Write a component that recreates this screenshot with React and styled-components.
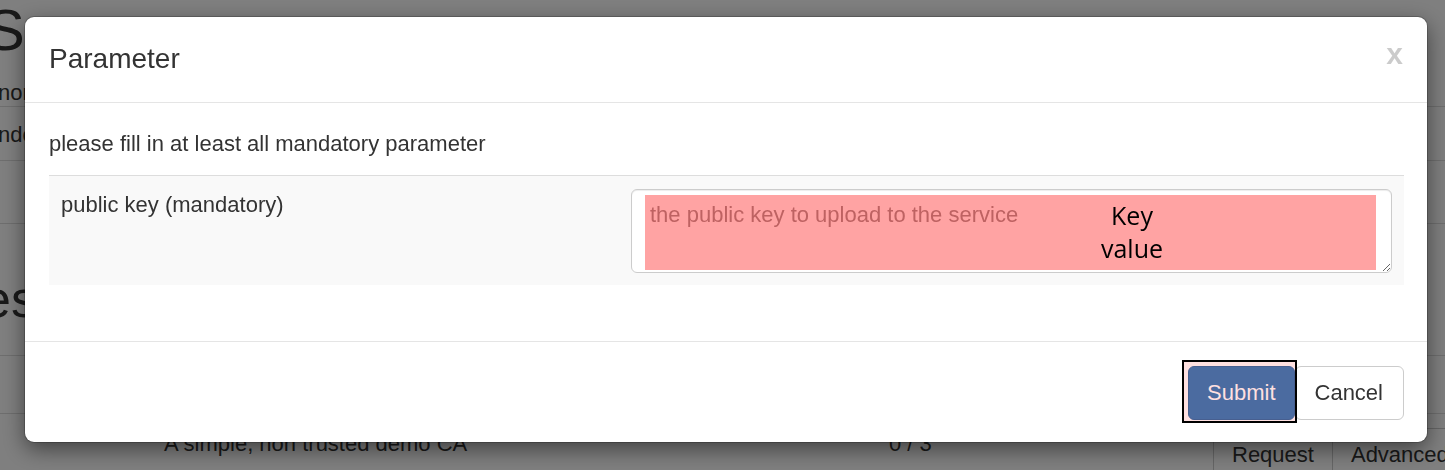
import React from 'react'
import styled, { createGlobalStyle } from 'styled-components'

const GlobalStyle = createGlobalStyle`
  html, body {
    margin: 0;
    padding: 0;
  }
  body {
    font-family: "Liberation Sans", Arial, sans-serif;
    font-size: 22px;
    line-height: 1.42857;
    color: #333;
    background: #fff;
    overflow: hidden;
  }
  * {
    box-sizing: border-box;
  }
`

/* page behind the dialog */
const Page = styled.div`
  width: 1445px;
  height: 470px;
  overflow: hidden;
`

const PageTitle = styled.h1`
  margin: -2px 0 0 -14px;
  font-size: 58px;
  font-weight: 400;
  line-height: 1.1;
  white-space: nowrap;
`

const InfoRow = styled.div`
  height: ${p => p.$h}px;
  padding-top: ${p => p.$pt}px;
  margin-left: -2px;
  border-bottom: 1px solid #ddd;
  line-height: 24px;
  white-space: nowrap;
`

const SectionTitle = styled.h2`
  margin: 47px 0 0 -18px;
  font-size: 52px;
  font-weight: 400;
  line-height: 1.1;
  white-space: nowrap;
`

const CaTable = styled.div`
  margin-top: 27px;
  border-top: 1px solid #ddd;
`

const CaHead = styled.div`
  height: 58px;
  border-bottom: 1px solid #ddd;
`

const CaRow = styled.div`
  display: grid;
  grid-template-columns: 152px 725px 324px 1fr;
`

const CaCell = styled.div`
  padding: 14px 12px 0;
  white-space: nowrap;
`

const BtnGroup = styled.div`
  display: inline-flex;
`

const PageButton = styled.button`
  font: inherit;
  color: #333;
  background: #fff;
  border: 1px solid #ccc;
  padding: 10px 18px;
  margin-left: ${p => (p.$joined ? '-1px' : '0')};
  border-radius: ${p => (p.$joined ? '0 6px 6px 0' : '6px 0 0 6px')};
  white-space: nowrap;
`

/* modal */
const Backdrop = styled.div`
  position: fixed;
  inset: 0;
  background: rgba(0, 0, 0, 0.5);
`

const Dialog = styled.div`
  position: fixed;
  top: 17px;
  left: 25px;
  width: 1402px;
  display: flex;
  flex-direction: column;
  background: #fff;
  border-radius: 9px;
  box-shadow: 0 0 0 1px rgba(0, 0, 0, 0.2), 0 7px 22px rgba(0, 0, 0, 0.5);
`

const Header = styled.div`
  display: flex;
  justify-content: space-between;
  padding: 22px 24px 23px;
  border-bottom: 1px solid #e5e5e5;
`

const Title = styled.h4`
  margin: 0;
  font-size: 28px;
  font-weight: 500;
  line-height: 40px;
`

const Close = styled.button`
  align-self: flex-start;
  margin-top: 0;
  padding: 0;
  border: 0;
  background: none;
  font-family: "Liberation Sans", Arial, sans-serif;
  font-size: 30px;
  font-weight: 700;
  line-height: 1;
  color: #000;
  opacity: 0.2;
`

const Body = styled.div`
  padding: 25px 23px 24px 24px;
`

const Lead = styled.p`
  margin: 0 0 16px;
`

const ParamTable = styled.div`
  border-top: 1px solid #ddd;
  margin-bottom: 32px;
`

const ParamRow = styled.div`
  display: grid;
  grid-template-columns: 570px 1fr;
  background: #f9f9f9;
`

const ParamCell = styled.div`
  padding: 13px 12px 12px;
`

const Field = styled.div`
  position: relative;
`

const TextArea = styled.textarea`
  display: block;
  width: 100%;
  height: 84px;
  padding: 9px 18px;
  font: inherit;
  color: #555;
  background: #fff;
  border: 1px solid #ccc;
  border-radius: 6px;
  box-shadow: inset 0 1px 1px rgba(0, 0, 0, 0.075);
  &::placeholder {
    color: #999;
  }
`

const Highlight = styled.div`
  position: absolute;
  top: 6px;
  left: 14px;
  right: 16px;
  bottom: 3px;
  padding: 4px 0 0 387px;
  background: rgba(255, 0, 0, 0.36);
  pointer-events: none;
`

const Note = styled.div`
  width: 200px;
  text-align: center;
  font-family: "Open Sans", "Noto Sans", sans-serif;
  font-size: 25px;
  line-height: 33px;
  color: #000;
`

const Footer = styled.div`
  display: flex;
  justify-content: flex-end;
  padding: 24px 23px 22px;
  border-top: 1px solid #e5e5e5;
`

const Marked = styled.span`
  position: relative;
  display: inline-flex;
  z-index: 1;
  &::after {
    content: '';
    position: absolute;
    top: -6px;
    left: -6px;
    right: -2px;
    bottom: -3px;
    border: 2px solid #000;
    background: rgba(255, 0, 0, 0.12);
  }
`

const Button = styled.button`
  font: inherit;
  padding: ${p => (p.$primary ? '10px 18px' : '10px 20px 10px 19px')};
  border-radius: 6px;
  border: 1px solid ${p => (p.$primary ? '#2e6da4' : '#ccc')};
  background: ${p => (p.$primary ? '#337ab7' : '#fff')};
  color: ${p => (p.$primary ? '#fff' : '#333')};
  white-space: nowrap;
`

const App = () => {
  return (
    <>
      <GlobalStyle />
      <Page>
        <PageTitle>Servers</PageTitle>
        <InfoRow $h={45} $pt={19}>none</InfoRow>
        <InfoRow $h={54} $pt={16}>ndes</InfoRow>
        <InfoRow $h={63} $pt={16}></InfoRow>
        <SectionTitle>established CAs</SectionTitle>
        <CaTable>
          <CaHead />
          <CaRow>
            <CaCell />
            <CaCell>A simple, non trusted demo CA</CaCell>
            <CaCell>0 / 3</CaCell>
            <CaCell>
              <BtnGroup>
                <PageButton>Request</PageButton>
                <PageButton $joined>Advanced</PageButton>
              </BtnGroup>
            </CaCell>
          </CaRow>
        </CaTable>
      </Page>

      <Backdrop />
      <Dialog>
        <Header>
          <Title>Parameter</Title>
          <Close>x</Close>
        </Header>
        <Body>
          <Lead>please fill in at least all mandatory parameter</Lead>
          <ParamTable>
            <ParamRow>
              <ParamCell>public key (mandatory)</ParamCell>
              <ParamCell>
                <Field>
                  <TextArea placeholder="the public key to upload to the service" />
                  <Highlight>
                    <Note>Key<br />value</Note>
                  </Highlight>
                </Field>
              </ParamCell>
            </ParamRow>
          </ParamTable>
        </Body>
        <Footer>
          <Marked>
            <Button $primary>Submit</Button>
          </Marked>
          <Button>Cancel</Button>
        </Footer>
      </Dialog>
    </>
  )
}

export default App
